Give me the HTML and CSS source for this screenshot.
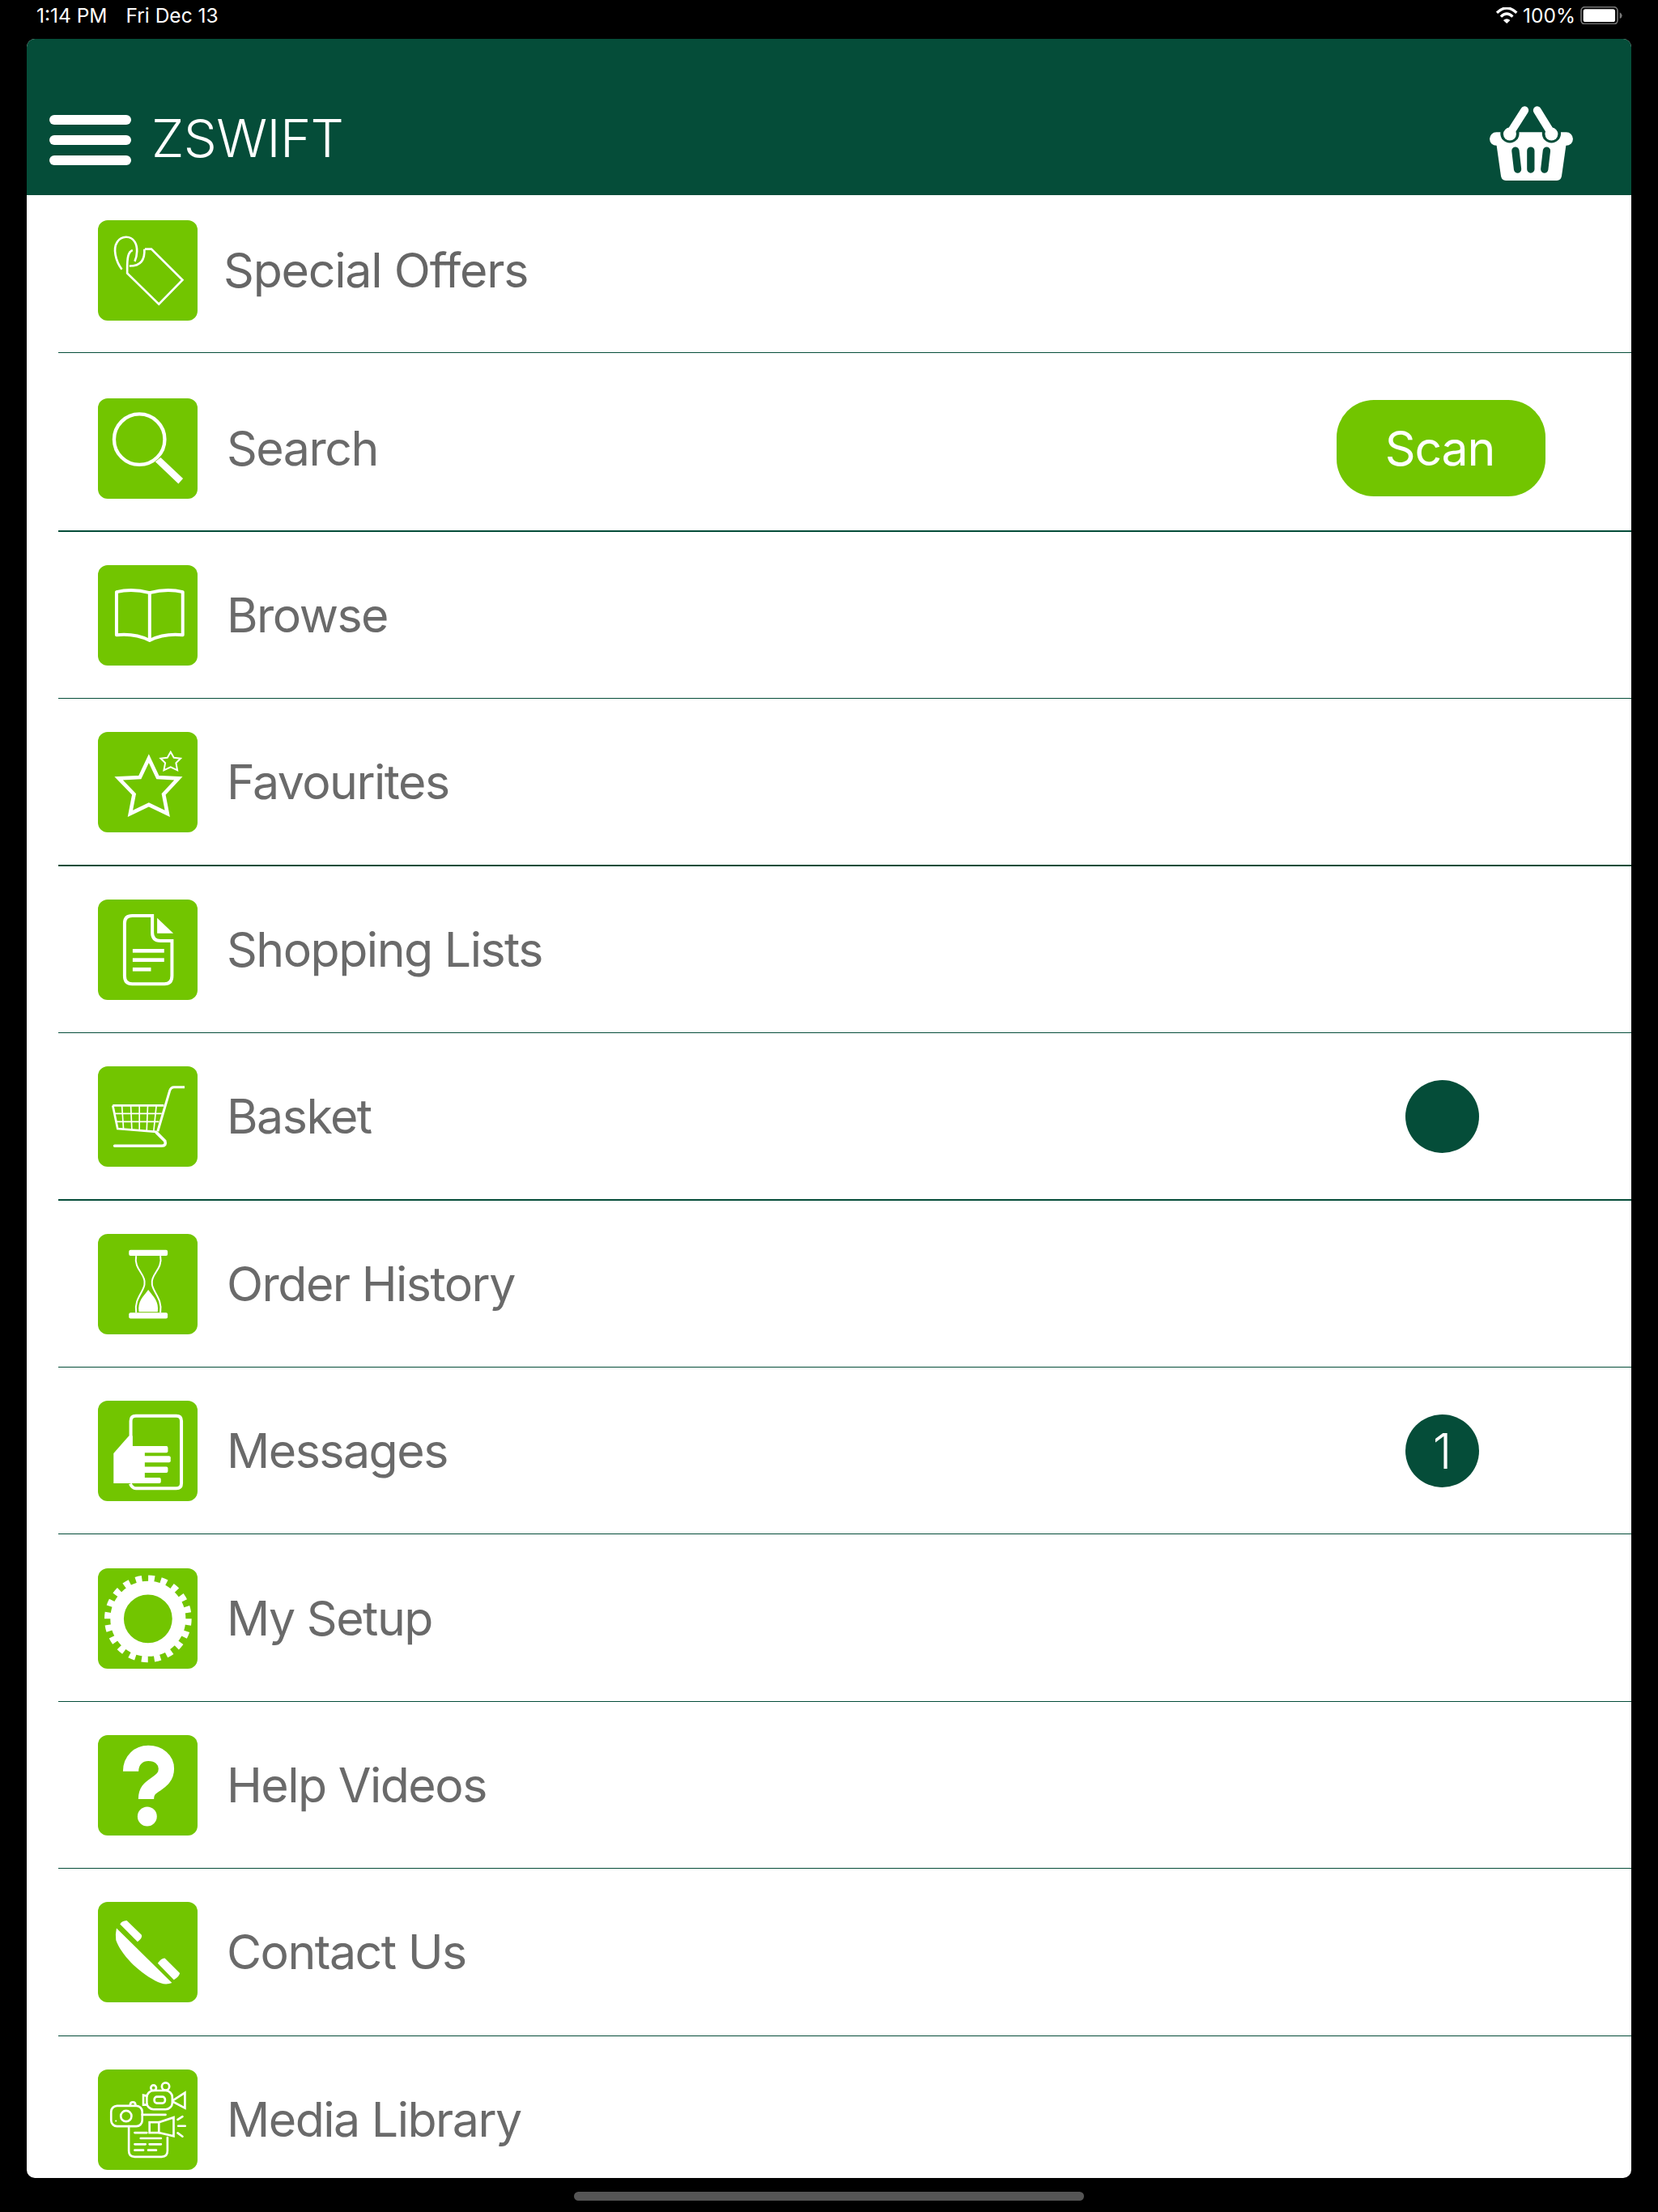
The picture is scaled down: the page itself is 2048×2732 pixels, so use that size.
FILE: index.html
```html
<!DOCTYPE html>
<html lang="en">
<head>
<meta charset="utf-8">
<title>ZSWIFT</title>
<link rel="stylesheet" href="styles.css">
</head>
<body>
<div class="status">
  <div class="status-left"><span>1:14 PM</span><span>Fri Dec 13</span></div>
  <div class="status-right">
    <svg class="wifi" viewBox="745 30 82 60"><path d="M748 50Q785 15 822 50" stroke-width="10"/><path d="M763 65Q785 43 807 65" stroke-width="10"/><path class="f" d="M772 78Q785 68 798 78L785 90Z"/></svg>
    <span>100%</span>
    <svg class="battery" viewBox="1056 26 156 67"><rect class="b-out" x="1058" y="28" width="137" height="64" rx="14"/><rect class="f" x="1066" y="36" width="120" height="48" rx="8"/><path class="b-nub" d="M1203 48Q1212 52 1212 60Q1212 68 1203 72Z"/></svg>
  </div>
</div>
<main class="card">
  <header class="header">
    <div class="brand">
      <div class="burger"><i></i><i></i><i></i></div>
      <span class="title">ZSWIFT</span>
    </div>
    <svg class="basket-icon" viewBox="720 390 310 280">
      <path class="f" d="M745 530L762 650Q765 667 780 667H970Q985 667 988 650L1005 530Z"/>
      <rect class="f" x="720" y="487" width="310" height="50" rx="25"/>
      <circle class="d" cx="795" cy="492" r="35"/><circle class="d" cx="950" cy="492" r="35"/>
      <path class="w" d="M795 492L850 406M950 492L897 406"/>
      <circle class="f" cx="795" cy="494" r="24"/><circle class="f" cx="950" cy="494" r="24"/>
      <path class="s" d="M816 556L824 625M873 556V625M932 556L924 625"/>
    </svg>
  </header>
  <ul class="menu">
    <li class="row row-first">
      <span class="tile"><svg viewBox="63 66 371 371"><path d="M238 172H262L378 287L290 377L172 262V245C172 205 175 182 192 176" stroke-width="8"/><path d="M152 248C128 215 118 170 135 145C150 122 185 120 200 145C212 165 210 195 200 218" stroke-width="8"/><path d="M236 172C238 210 225 235 180 235" stroke-width="8"/></svg></span>
      <span class="label label-first">Special Offers</span>
    </li>
    <li class="row row-second thick">
      <span class="tile"><svg viewBox="183 66 370 370"><circle cx="337" cy="217" r="94" stroke-width="13"/><polygon class="f" points="396,300 416,284 499,362 482,382"/></svg></span>
      <span class="label">Search</span>
      <span class="scan">Scan</span>
    </li>
    <li class="row">
      <span class="tile"><svg viewBox="183 684 370 370"><path d="M252 782Q310 768 375 785Q440 768 498 782V942Q430 935 375 962Q320 935 252 942ZM375 785V962" stroke-width="12" stroke-linejoin="round"/></svg></span>
      <span class="label">Browse</span>
    </li>
    <li class="row thick">
      <span class="tile"><svg viewBox="183 73 370 370"><polygon class="star" points="372,170 405,240 482,244 427,303 441,375 372,342 303,375 317,303 260,244 339,240" stroke-width="14"/><polygon class="star" points="453,146 465,167 490,170 473,187 478,214 453,202 428,214 433,187 416,170 441,167" stroke-width="6"/></svg></span>
      <span class="label">Favourites</span>
    </li>
    <li class="row">
      <span class="tile"><svg viewBox="183 693 370 370"><path d="M385 752H310Q282 752 282 780V975Q282 1005 310 1005H430Q458 1005 458 975V845H415Q385 845 385 815Z" stroke-width="12"/><path class="f" d="M403 760L463 817H403Z"/><rect class="f" x="312" y="875" width="117" height="14"/><rect class="f" x="312" y="909" width="117" height="14"/><rect class="f" x="312" y="944" width="68" height="14"/></svg></span>
      <span class="label">Shopping Lists</span>
    </li>
    <li class="row thick">
      <span class="tile"><svg viewBox="183 82 370 370"><path d="M505 158H465Q455 158 450 170L405 322" stroke-width="9"/><path d="M238 226H428M238 226L256 312L400 324" stroke-width="8"/><path d="M272 226L278 315M305 226L309 318M337 226V320M368 226L364 322M400 226L390 322M243 256H420M250 286H410" stroke-width="5"/><path d="M400 326L432 358Q438 376 420 376H245" stroke-width="11" stroke-linecap="round"/></svg></span>
      <span class="label">Basket</span>
      <span class="badge"></span>
    </li>
    <li class="row">
      <span class="tile"><svg viewBox="183 702 370 370"><rect class="f" x="298" y="760" width="144" height="22" rx="6"/><rect class="f" x="298" y="993" width="144" height="22" rx="6"/><path d="M325 782C315 830 360 850 356 882C360 910 315 940 325 993M415 782C425 830 380 850 384 882C380 910 425 940 415 993" stroke-width="6"/><path class="f" d="M370 908C350 935 330 950 335 990H405C410 950 390 935 370 908Z"/></svg></span>
      <span class="label">Order History</span>
    </li>
    <li class="row">
      <span class="tile"><svg viewBox="183 91 370 370"><path d="M305 222V165Q305 146 324 146H474Q493 146 493 165V396Q493 415 474 415H324Q310 415 303 398" stroke-width="12"/><path class="f" d="M298 220L241 285V396H357V258H312V220Z"/><rect class="f" x="312" y="258" width="131" height="25" rx="6"/><rect class="f" x="340" y="295" width="113" height="24" rx="6"/><rect class="f" x="340" y="335" width="103" height="22" rx="6"/><rect class="f" x="340" y="375" width="77" height="21" rx="6"/></svg></span>
      <span class="label">Messages</span>
      <span class="badge">1</span>
    </li>
    <li class="row">
      <span class="tile"><svg viewBox="183 711 370 370"><circle cx="369" cy="897" r="115" stroke-width="50"/><circle cx="369" cy="897" r="150" stroke-width="24" pathLength="20" stroke-dasharray="0.5 0.5"/></svg></span>
      <span class="label">My Setup</span>
    </li>
    <li class="row">
      <span class="tile"><svg viewBox="183 99 370 370"><path d="M305 232C305 190 335 165 370 165C410 165 437 190 437 222C437 255 415 268 395 282C375 296 362 305 362 335" stroke-width="58"/><circle class="f" cx="366" cy="400" r="36"/></svg></span>
      <span class="label">Help Videos</span>
    </li>
    <li class="row">
      <span class="tile"><svg viewBox="183 719 370 370"><path class="f" d="M252 815L458 1018Q430 1030 395 1010C330 975 270 915 250 860Q247 835 252 815Z"/><path class="f" d="M265 800Q272 788 290 787L345 840Q350 850 330 866ZM405 945Q420 925 432 927L487 982Q485 995 465 1007Z"/></svg></span>
      <span class="label">Contact Us</span>
    </li>
    <li class="row">
      <span class="tile"><svg viewBox="63 48 371 371"><g stroke-width="8" stroke-linecap="round"><rect x="245" y="125" width="95" height="70" rx="25"/><rect x="273" y="148" width="40" height="24" rx="10"/><circle cx="270" cy="115" r="10"/><circle cx="315" cy="110" r="14"/><path d="M245 145L232 142V178L245 178M345 160L387 133V190L345 168"/><rect x="112" y="182" width="116" height="76" rx="22"/><circle cx="168" cy="220" r="20"/><path d="M183 180C183 164 203 164 203 180M228 215H315M178 258V350Q178 372 200 372H300Q322 372 322 350V300"/><rect x="255" y="243" width="35" height="39"/><path d="M290 243L345 225V295L290 282M360 233L378 222M362 257H388M360 283L378 296M200 282H245M222 303H298M200 325H240M255 325H298M200 347H232M250 347H280"/></g><circle class="f" cx="130" cy="238" r="3"/></svg></span>
      <span class="label">Media Library</span>
    </li>
  </ul>
</main>
<div class="home"></div>
</body>
</html>
```
FILE: styles.css
```css
* { box-sizing: border-box; }
html, body { margin: 0; padding: 0; }
body {
  width: 2048px;
  height: 2732px;
  background: #000;
  overflow: hidden;
  position: relative;
  font-family: Inter, "Liberation Sans", sans-serif;
}
.status {
  height: 48px;
  padding: 0 44px 10px 45px;
  display: flex;
  justify-content: space-between;
  align-items: center;
  color: #fff;
  font-size: 24.5px;
}
.status-left { display: flex; gap: 23px; }
.status-right { display: flex; align-items: center; gap: 6px; }
.wifi { width: 27px; height: 20px; fill: none; stroke: #fff; }
.wifi .f, .battery .f { fill: #fff; stroke: none; }
.battery { width: 52px; height: 22px; fill: none; }
.b-out { stroke: #777; stroke-width: 5; }
.b-nub { fill: #777; }
.card {
  width: 1982px;
  height: 2642px;
  margin-left: 33px;
  background: #fff;
  border-radius: 10px;
  overflow: hidden;
}
.header {
  height: 193px;
  background: #054d39;
  display: flex;
  align-items: flex-end;
  justify-content: space-between;
  padding: 0 72px 17px 28px;
}
.brand { display: flex; align-items: center; gap: 25px; margin-bottom: 20px; }
.burger { display: flex; flex-direction: column; gap: 13px; width: 101px; }
.burger i { display: block; height: 12px; background: #fff; border-radius: 6px; }
.title { color: #fff; font-size: 65px; line-height: 58px; font-weight: 350; letter-spacing: -0.6px; margin-bottom: 4px; }
.basket-icon { width: 103px; height: 93px; display: block; }
.basket-icon .f { fill: #fff; }
.basket-icon .d { fill: #054d39; }
.basket-icon .w { fill: none; stroke: #fff; stroke-width: 30; stroke-linecap: round; }
.basket-icon .s { fill: none; stroke: #054d39; stroke-width: 28; stroke-linecap: round; }
.menu { list-style: none; margin: 0 0 0 39px; padding: 0; }
.row {
  height: 206.4px;
  padding-left: 49px;
  padding-top: 1px;
  display: flex;
  align-items: center;
  border-bottom: 1px solid #054d39;
}
.thick { border-bottom-width: 2px; }
.row-first { height: 195px; padding-top: 0; padding-bottom: 8px; }
.row-second { height: 221px; padding-top: 16px; }
.tile {
  width: 123px;
  height: 124px;
  flex: none;
  background: #72c500;
  border-radius: 12px;
}
.tile svg { display: block; width: 100%; height: 100%; fill: none; stroke: #fff; }
.tile .f { fill: #fff; stroke: none; }
.tile .star { stroke-miterlimit: 10; }
.label {
  margin-left: 36px;
  font-size: 59px;
  line-height: 70px;
  letter-spacing: -1.5px;
  color: #6a6a6a;
}
.label-first { margin-left: 32px; letter-spacing: -1.2px; color: #666; }
.scan {
  width: 258px;
  height: 119px;
  margin-left: auto;
  margin-right: 106px;
  padding-right: 3px;
  background: #72c500;
  color: #fff;
  border-radius: 46px;
  display: flex;
  align-items: center;
  justify-content: center;
  font-size: 59px;
  letter-spacing: -1.2px;
}
.badge {
  width: 91px;
  height: 90px;
  margin-left: auto;
  margin-right: 188px;
  background: #054d39;
  color: #fff;
  border-radius: 50%;
  display: flex;
  align-items: center;
  justify-content: center;
  font-size: 60px;
  font-weight: 350;
}
.home {
  position: absolute;
  left: 709px;
  top: 2707px;
  width: 630px;
  height: 11px;
  border-radius: 6px;
  background: #555;
}
```
